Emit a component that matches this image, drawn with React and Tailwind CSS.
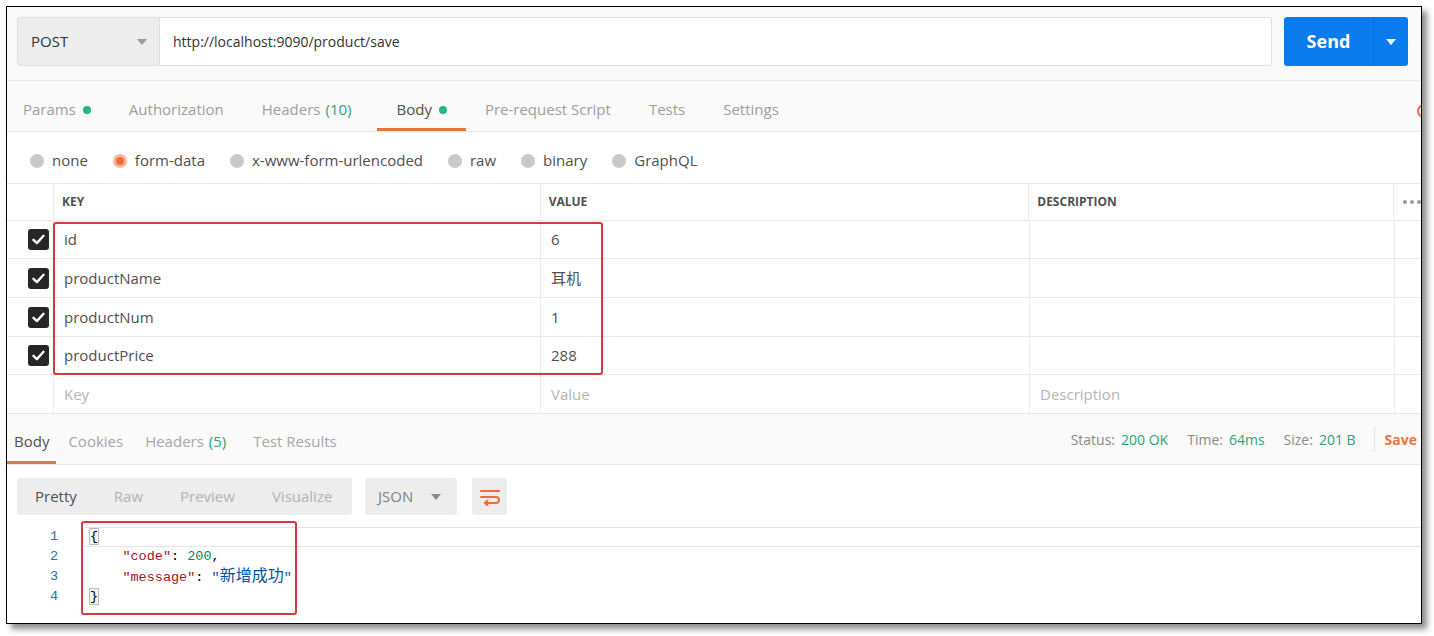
import React from "react";

const Caret = ({ className = "" }) => (
  <svg width="10" height="6" viewBox="0 0 10 6" className={className}>
    <path d="M0 0h10L5 6z" fill="currentColor" />
  </svg>
);

const Check = () => (
  <div className="w-[21px] h-[21px] rounded-[3px] bg-[#262626] flex items-center justify-center">
    <svg width="13" height="11" viewBox="0 0 13 11">
      <path d="M1.5 5.8l3.4 3.3L11.5 1.8" fill="none" stroke="#fff" strokeWidth="2.4" strokeLinecap="round" strokeLinejoin="round" />
    </svg>
  </div>
);

const Dot = () => <span className="inline-block w-[8px] h-[8px] rounded-full bg-[#26b47f] ml-[7px]" />;

const rows = [
  { k: "id", v: "6", h: "h-[38px]" },
  { k: "productName", v: "耳机", h: "h-[39px]" },
  { k: "productNum", v: "1", h: "h-[39px]" },
  { k: "productPrice", v: "288", h: "h-[38px]" },
];

const radios = [
  { label: "none" },
  { label: "form-data", on: true },
  { label: "x-www-form-urlencoded" },
  { label: "raw" },
  { label: "binary" },
  { label: "GraphQL" },
];

const tabs = [
  { t: "Params", dot: true },
  { t: "Authorization" },
  { t: "Headers", n: "(10)" },
  { t: "Body", dot: true, on: true },
  { t: "Pre-request Script" },
  { t: "Tests" },
  { t: "Settings" },
];

export default function App() {
  return (
    <div className="w-[1434px] h-[636px] bg-white pt-[6px] pl-[6px] font-['Open_Sans','Noto_Sans_CJK_SC',sans-serif] overflow-hidden">
      <div className="relative w-[1416px] h-[618px] border border-black bg-white overflow-hidden flex flex-col shadow-[5px_5px_6px_rgba(0,0,0,0.45)]">
        {/* request bar */}
        <div className="h-[73px] shrink-0 bg-[#f9f9f9] pt-[10px] pl-[10px] pr-[13px] flex">
          <div className="w-[143px] h-[49px] bg-[#ededed] border border-[#e0e0e0] rounded-l-[3px] flex items-center pl-[13px] pr-[12px] text-[15px] text-[#333]">
            <span className="flex-1">POST</span>
            <Caret className="text-[#9b9b9b]" />
          </div>
          <div className="flex-1 h-[49px] bg-white border border-l-0 border-[#e0e0e0] rounded-r-[3px] flex items-center pl-[13px] text-[14px] text-[#333]">
            http://localhost:9090/product/save
          </div>
          <div className="ml-[12px] w-[124px] h-[49px] bg-[#097bed] rounded-[3px] flex text-white">
            <div className="w-[89px] flex items-center justify-center text-[18px] font-bold">Send</div>
            <div className="flex-1 border-l border-[#0a6fd6] flex items-center justify-center">
              <Caret className="text-white" />
            </div>
          </div>
        </div>

        {/* request tabs */}
        <div className="h-[52px] shrink-0 border-y border-[#e8e8e8] bg-[#fafafa] flex text-[15px] text-[#9e9e9e]">
          <div className="flex -ml-[3px]">
            {tabs.map((tab) => (
              <div
                key={tab.t}
                className={`px-[19px] pt-[10px] flex items-center border-b-[3px] ${tab.on ? "ml-[7px] border-[#e0793f] text-[#505050]" : "border-transparent"}`}
              >
                {tab.t}
                {tab.n && <span className="ml-[5px] text-[#2fa27b]">{tab.n}</span>}
                {tab.dot && <Dot />}
              </div>
            ))}
          </div>
          <div className="ml-auto w-[4px] overflow-hidden pt-[10px] flex items-center">
            <span className="shrink-0 w-[14px] h-[14px] rounded-full border-2 border-[#f26b3a]" />
          </div>
        </div>

        {/* body type radios */}
        <div className="h-[51px] shrink-0 pt-[6px] pl-[23px] flex items-center gap-[25px] text-[15px] text-[#505050]">
          {radios.map((r) => (
            <div key={r.label} className="flex items-center gap-[8px]">
              {r.on ? (
                <span className="w-[14px] h-[14px] rounded-full bg-[#f7b89b] flex items-center justify-center">
                  <span className="w-[8px] h-[8px] rounded-full bg-[#f26b3a]" />
                </span>
              ) : (
                <span className="w-[14px] h-[14px] rounded-full bg-[#c9c9c9]" />
              )}
              {r.label}
            </div>
          ))}
        </div>

        {/* params table */}
        <div className="shrink-0 text-[#505050]">
          <div className="h-[38px] border-y border-[#e6e6e6] flex text-[12px] font-bold pb-[1px]">
            <div className="w-[47px] border-r border-[#ececec]" />
            <div className="w-[487px] border-r border-[#ececec] pl-[8px] flex items-center">KEY</div>
            <div className="w-[489px] border-r border-[#ececec] pl-[8px] flex items-center">VALUE</div>
            <div className="w-[365px] border-r border-[#ececec] pl-[8px] flex items-center">DESCRIPTION</div>
            <div className="flex-1 pl-[9px] flex items-center gap-[3px]">
              <span className="w-[4px] h-[4px] rounded-full bg-[#9a9a9a]" />
              <span className="w-[4px] h-[4px] rounded-full bg-[#9a9a9a]" />
              <span className="w-[4px] h-[4px] rounded-full bg-[#9a9a9a]" />
            </div>
          </div>
          {rows.map((r) => (
            <div key={r.k} className={`${r.h} border-b border-[#e9e9e9] flex text-[15px]`}>
              <div className="w-[47px] border-r border-[#ececec] pl-[21px] flex items-center">
                <Check />
              </div>
              <div className="w-[487px] border-r border-[#ececec] pl-[10px] flex items-center">{r.k}</div>
              <div className="w-[489px] border-r border-[#ececec] pl-[10px] flex items-center">{r.v}</div>
              <div className="w-[365px] border-r border-[#ececec]" />
              <div className="flex-1" />
            </div>
          ))}
          <div className="h-[39px] border-b border-[#e9e9e9] flex text-[15px] text-[#b5b5b5]">
            <div className="w-[47px] border-r border-[#ececec]" />
            <div className="w-[487px] border-r border-[#ececec] pl-[10px] flex items-center">Key</div>
            <div className="w-[489px] border-r border-[#ececec] pl-[10px] flex items-center">Value</div>
            <div className="w-[365px] border-r border-[#ececec] pl-[10px] flex items-center">Description</div>
            <div className="flex-1" />
          </div>
        </div>

        {/* response tabs */}
        <div className="h-[51px] shrink-0 bg-[#fafafa] border-b border-[#e6e6e6] flex text-[15px] text-[#a6a6a6]">
          <div className="flex">
            <div className="px-[7px] pt-[8px] flex items-center border-b-[3px] border-[#e0793f] text-[#505050]">Body</div>
            <div className="ml-[2px] px-[10px] pt-[8px] flex items-center border-b-[3px] border-transparent">Cookies</div>
            <div className="ml-[2px] px-[10px] pt-[8px] flex items-center border-b-[3px] border-transparent">
              Headers<span className="ml-[5px] text-[#2fa27b]">(5)</span>
            </div>
            <div className="ml-[7px] px-[10px] pt-[8px] flex items-center border-b-[3px] border-transparent">Test Results</div>
          </div>
          <div className="ml-auto pr-[4px] flex items-center text-[14px] text-[#8a8a8a]">
            <span>Status:</span>
            <span className="ml-[6px] text-[#2fa27b]">200 OK</span>
            <span className="ml-[19px]">Time:</span>
            <span className="ml-[6px] text-[#2fa27b]">64ms</span>
            <span className="ml-[19px]">Size:</span>
            <span className="ml-[6px] text-[#2fa27b]">201 B</span>
            <span className="ml-[18px] w-px h-[26px] bg-[#e6e6e6]" />
            <span className="ml-[10px] font-bold text-[#f07241]">Save</span>
          </div>
        </div>

        {/* toolbar */}
        <div className="h-[51px] shrink-0 pt-[13px] pl-[10px] flex text-[15px]">
          <div className="w-[335px] h-[37px] bg-[#ededed] rounded-[3px] flex items-center pl-[18px] gap-[37px] text-[#b3b3b3]">
            <span className="text-[#505050]">Pretty</span>
            <span>Raw</span>
            <span>Preview</span>
            <span>Visualize</span>
          </div>
          <div className="ml-[13px] w-[92px] h-[37px] bg-[#ededed] rounded-[3px] flex items-center pl-[13px] pr-[16px] text-[#808080]">
            <span className="flex-1">JSON</span>
            <Caret className="text-[#8a8a8a]" />
          </div>
          <div className="ml-[15px] w-[35px] h-[37px] bg-[#ededed] rounded-[3px] flex items-center justify-center">
            <svg width="22" height="18" viewBox="0 0 22 18" fill="none" stroke="#f26b3a" strokeWidth="2" strokeLinecap="round" strokeLinejoin="round">
              <path d="M2 3h18" />
              <path d="M2 9h15a3 3 0 0 1 0 6H6" />
              <path d="M8.5 12.5L6 15l2.5 2.5" />
            </svg>
          </div>
        </div>

        {/* code */}
        <div className="pt-[11px] font-['Liberation_Mono','Noto_Sans_CJK_SC',monospace] text-[13.5px] leading-[20px]">
          {[
            <span><span className="outline-1 outline-[#bdbdbd] bg-[#f3f3f3]">{"{"}</span></span>,
            <span>
              {"    "}
              <span className="text-[#a31515]">"code"</span>: <span className="text-[#098658]">200</span>,
            </span>,
            <span>
              {"    "}
              <span className="text-[#a31515]">"message"</span>:{" "}
              <span className="text-[#0451a5]">"<span className="text-[16px]">新增成功</span>"</span>
            </span>,
            <span><span className="outline-1 outline-[#bdbdbd] bg-[#f3f3f3]">{"}"}</span></span>,
          ].map((c, i) => (
            <div key={i} className="flex h-[20px]">
              <div className="w-[51px] text-right text-[#237893]">{i + 1}</div>
              <div className={`flex-1 ml-[27px] pl-[5px] whitespace-pre text-black ${i === 0 ? "border-y border-[#e3e3e3] leading-[18px]" : ""}`}>{c}</div>
            </div>
          ))}
        </div>

        {/* red annotation boxes */}
        <div className="absolute left-[46px] top-[215px] w-[550px] h-[153px] border-2 border-[#d9393e] rounded-[3px]" />
        <div className="absolute left-[74px] top-[514px] w-[216px] h-[94px] border-2 border-[#d9393e] rounded-[3px]" />
      </div>
    </div>
  );
}
